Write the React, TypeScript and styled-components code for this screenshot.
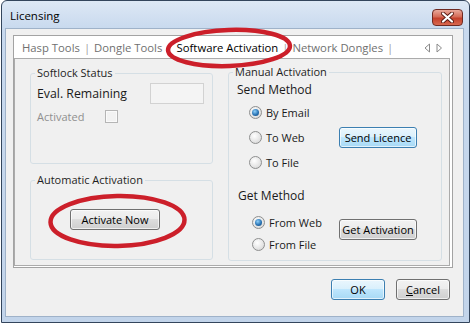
import React from "react";
import styled, { createGlobalStyle } from "styled-components";

const GlobalStyle = createGlobalStyle`
  html, body { margin: 0; padding: 0; background: #ffffff; }
  body { font-family: "Open Sans", "Noto Sans", "DejaVu Sans", sans-serif; color: #1a1a1a; }
  * { box-sizing: border-box; }
`;

const Window = styled.div`
  position: relative;
  width: 469px;
  height: 323px;
  margin-left: 1px;
  border: 1px solid #33455c;
  border-radius: 6px 6px 0 0;
  background: linear-gradient(#dde8f5, #c8d9ee 28px, #c2d4ea);
  display: flex;
  flex-direction: column;
  overflow: hidden;
`;

const TitleBar = styled.div`
  height: 27px;
  display: flex;
  justify-content: space-between;
  align-items: flex-start;
  padding: 7px 6px 0 8px;
`;

const Title = styled.span`
  font-size: 11.5px;
  line-height: 16px;
  color: #000;
`;

const CloseButton = styled.div`
  width: 31px;
  height: 17px;
  margin-top: 1px;
  border: 1px solid #6e2a22;
  border-radius: 4px;
  background: linear-gradient(#e9a99b, #d56b57 45%, #c4402b 55%, #d8684f);
  display: flex;
  align-items: center;
  justify-content: center;
`;

const Client = styled.div`
  flex: 1;
  margin: 0 5px 5px 3px;
  border: 1px solid #9fb2c9;
  background: #f0f0f0;
  padding: 6px 10px 0 7px;
  display: flex;
  flex-direction: column;
`;

const TabControl = styled.div`
  height: 233px;
  border: 1px solid #a3a3a3;
  background: #ffffff;
  display: flex;
  flex-direction: column;
`;

const TabStrip = styled.div`
  height: 22px;
  display: flex;
  align-items: center;
  padding: 1px 9px 0 8px;
  font-size: 11.3px;
`;

const TabLabel = styled.span<{ $active?: boolean }>`
  color: ${(p) => (p.$active ? "#000000" : "#707070")};
  white-space: nowrap;
`;

const TabSep = styled.span`
  color: #a0a0a0;
  margin: 0 4px;
`;

const Arrows = styled.div`
  margin-left: auto;
  display: flex;
  gap: 5px;
`;

const Page = styled.div`
  flex: 1;
  margin: 0 2px 1px 0;
  border: 1px solid #ababab;
  background: #f0f0f0;
  padding: 5px 8px 0 15px;
  display: grid;
  grid-template-columns: 183px 214px;
  column-gap: 15px;
  align-items: start;
`;

const Column = styled.div`
  display: flex;
  flex-direction: column;
  gap: 8px;
  margin-top: 1px;
`;

const Group = styled.fieldset<{ $h: number }>`
  margin: 0;
  padding: 0;
  min-width: 0;
  height: ${(p) => p.$h}px;
  border: 1px solid #d5dfe5;
  border-radius: 3px;
`;

const Legend = styled.legend`
  margin-left: 4px;
  padding: 0 2px;
  font-size: 11px;
  line-height: 16px;
  color: #1e1e1e;
`;

const FieldRow = styled.div<{ $top: number }>`
  display: flex;
  align-items: center;
  margin-top: ${(p) => p.$top}px;
  padding-left: 6px;
`;

const FieldLabel = styled.span<{ $w: number; $size?: number; $disabled?: boolean }>`
  width: ${(p) => p.$w}px;
  font-size: ${(p) => p.$size ?? 11}px;
  color: ${(p) => (p.$disabled ? "#8f8f8f" : "#1a1a1a")};
  white-space: nowrap;
`;

const TextBox = styled.div`
  width: 54px;
  height: 21px;
  border: 1px solid #d2d2d2;
  background: #f4f4f4;
`;

const CheckBox = styled.span`
  width: 13px;
  height: 13px;
  border: 1px solid #b5b5b5;
  background: #f2f2f2;
  box-shadow: inset 0 0 0 1px #fafafa;
`;

const Button = styled.div<{ $w: number; $primary?: boolean }>`
  width: ${(p) => p.$w}px;
  height: 21px;
  border: 1px solid ${(p) => (p.$primary ? "#3c7fb1" : "#707070")};
  border-radius: 3px;
  background: ${(p) =>
    p.$primary
      ? "linear-gradient(#eaf6fd, #d9f0fc 49%, #bee6fd 50%, #a7d9f5)"
      : "linear-gradient(#f2f2f2, #ebebeb 49%, #dddddd 50%, #cfcfcf)"};
  box-shadow: inset 0 0 0 1px rgba(255, 255, 255, 0.65);
  display: flex;
  align-items: center;
  justify-content: center;
  font-size: 11px;
  color: #000;
  white-space: nowrap;
`;

const AutoBody = styled.div`
  padding: 21px 0 0 39px;
`;

const Heading = styled.div<{ $top: number; $left: number }>`
  margin-top: ${(p) => p.$top}px;
  padding-left: ${(p) => p.$left}px;
  font-size: 12px;
  line-height: 18px;
  color: #1a1a1a;
`;

const MethodBlock = styled.div<{ $top: number }>`
  display: flex;
  margin-top: ${(p) => p.$top}px;
`;

const RadioList = styled.div<{ $indent: number; $gap: number }>`
  width: 110px;
  padding-left: ${(p) => p.$indent}px;
  display: flex;
  flex-direction: column;
  gap: ${(p) => p.$gap}px;
`;

const RadioRow = styled.div`
  height: 20px;
  display: flex;
  align-items: center;
  gap: 4px;
  font-size: 11px;
  color: #1a1a1a;
`;

const Radio = styled.span<{ $checked?: boolean }>`
  position: relative;
  width: 13px;
  height: 13px;
  border-radius: 50%;
  border: 1px solid #8e8f8f;
  background: radial-gradient(circle at 40% 35%, #ffffff, #e4e4e4 60%, #cfcfcf);
  &::after {
    content: "";
    display: ${(p) => (p.$checked ? "block" : "none")};
    position: absolute;
    left: 2px;
    top: 2px;
    width: 7px;
    height: 7px;
    border-radius: 50%;
    background: radial-gradient(circle at 40% 35%, #8fd0fa, #2a74b5 55%, #14426f);
  }
`;

const ButtonSlot = styled.div<{ $top: number }>`
  margin-top: ${(p) => p.$top}px;
`;

const Footer = styled.div`
  margin-top: 11px;
  padding-right: 3px;
  display: flex;
  justify-content: flex-end;
  gap: 11px;
`;

const Overlay = styled.svg`
  position: absolute;
  left: -1px;
  top: -1px;
  pointer-events: none;
`;

function CloseGlyph() {
  return (
    <svg width="13" height="11" viewBox="0 0 13 11">
      <path d="M2 1.5 L11 9.5 M11 1.5 L2 9.5" stroke="#5a1d15" strokeWidth="4" strokeLinecap="round" />
      <path d="M2 1.5 L11 9.5 M11 1.5 L2 9.5" stroke="#ffffff" strokeWidth="2.2" strokeLinecap="round" />
    </svg>
  );
}

function ArrowGlyph({ dir }: { dir: "left" | "right" }) {
  const d = dir === "left" ? "M5.5 1 L1 5 L5.5 9 Z" : "M1 1 L5.5 5 L1 9 Z";
  return (
    <svg width="7" height="10" viewBox="0 0 7 10">
      <path d={d} fill="none" stroke="#8a8a8a" strokeWidth="1" />
    </svg>
  );
}

const tabs = ["Hasp Tools", "Dongle Tools", "Software Activation", "Network Dongles"];

export default function App() {
  return (
    <>
      <GlobalStyle />
      <Window>
        <TitleBar>
          <Title>Licensing</Title>
          <CloseButton>
            <CloseGlyph />
          </CloseButton>
        </TitleBar>
        <Client>
          <TabControl>
            <TabStrip>
              {tabs.map((t) => (
                <React.Fragment key={t}>
                  <TabLabel $active={t === "Software Activation"}>{t}</TabLabel>
                  <TabSep>|</TabSep>
                </React.Fragment>
              ))}
              <Arrows>
                <ArrowGlyph dir="left" />
                <ArrowGlyph dir="right" />
              </Arrows>
            </TabStrip>
            <Page>
              <Column>
                <Group $h={99}>
                  <Legend>Softlock Status</Legend>
                  <FieldRow $top={2}>
                    <FieldLabel $w={113} $size={12.3}>Eval. Remaining</FieldLabel>
                    <TextBox />
                  </FieldRow>
                  <FieldRow $top={5}>
                    <FieldLabel $w={68} $disabled>Activated</FieldLabel>
                    <CheckBox />
                  </FieldRow>
                </Group>
                <Group $h={88}>
                  <Legend>Automatic Activation</Legend>
                  <AutoBody>
                    <Button $w={90}>Activate Now</Button>
                  </AutoBody>
                </Group>
              </Column>
              <Group $h={197}>
                <Legend>Manual Activation</Legend>
                <Heading $top={1} $left={8}>Send Method</Heading>
                <MethodBlock $top={3}>
                  <RadioList $indent={20} $gap={5}>
                    <RadioRow><Radio $checked />By Email</RadioRow>
                    <RadioRow><Radio />To Web</RadioRow>
                    <RadioRow><Radio />To File</RadioRow>
                  </RadioList>
                  <ButtonSlot $top={25}>
                    <Button $w={78} $primary>Send Licence</Button>
                  </ButtonSlot>
                </MethodBlock>
                <Heading $top={15} $left={9}>Get Method</Heading>
                <MethodBlock $top={7}>
                  <RadioList $indent={23} $gap={2}>
                    <RadioRow><Radio $checked />From Web</RadioRow>
                    <RadioRow><Radio />From File</RadioRow>
                  </RadioList>
                  <ButtonSlot $top={7}>
                    <Button $w={78}>Get Activation</Button>
                  </ButtonSlot>
                </MethodBlock>
              </Group>
            </Page>
          </TabControl>
          <Footer>
            <Button $w={54} $primary>OK</Button>
            <Button $w={54}>
              <span><u>C</u>ancel</span>
            </Button>
          </Footer>
        </Client>
        <Overlay width="470" height="324" viewBox="0 0 470 324">
          <ellipse cx="228" cy="48" rx="61" ry="18" fill="none" stroke="#cc1f2a" strokeWidth="4.5" transform="rotate(-2 228 48)" />
          <ellipse cx="116.5" cy="221" rx="67" ry="25" fill="none" stroke="#cc1f2a" strokeWidth="4.5" transform="rotate(-1 116 221)" />
        </Overlay>
      </Window>
    </>
  );
}
